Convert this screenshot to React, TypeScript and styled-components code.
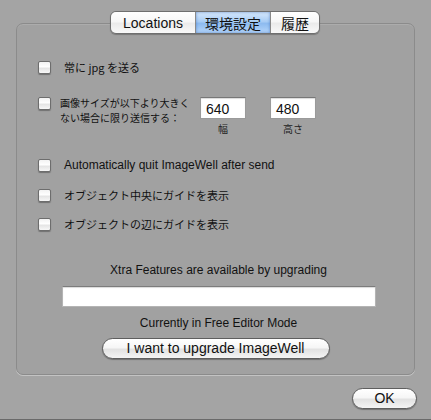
import * as React from 'react';
import styled, { createGlobalStyle } from 'styled-components';

const GlobalStyle = createGlobalStyle`
  html, body {
    margin: 0;
    padding: 0;
    background: #a4a4a4;
  }
`;

const ui = `"Liberation Sans", "Noto Sans CJK JP", Arial, sans-serif`;
const jp = `"Noto Sans CJK JP", "Liberation Sans", sans-serif`;

type Tab = { label: string; jp?: boolean };

const tabs: Tab[] = [
  { label: 'Locations' },
  { label: '環境設定', jp: true },
  { label: '履歴', jp: true },
];

const options = [
  { label: 'Automatically quit ImageWell after send', jp: false, top: 23 },
  { label: 'オブジェクト中央にガイドを表示', jp: true, top: 17 },
  { label: 'オブジェクトの辺にガイドを表示', jp: true, top: 16 },
];

export default function App() {
  const [active, setActive] = React.useState(1);

  return (
    <>
      <GlobalStyle />
      <Window>
        <TabBar>
          {tabs.map((t, i) => (
            <TabButton
              key={t.label}
              $selected={i === active}
              $jp={t.jp}
              $width={[84, 75, 49][i]}
              onClick={() => setActive(i)}
            >
              {t.label}
            </TabButton>
          ))}
        </TabBar>

        <Panel>
          <Row $top={37}>
            <Check />
            <Label $jp $gap={13}>
              常に jpg を送る
            </Label>
          </Row>

          <SizeRow>
            <Check />
            <SizeLabel>
              <SizeLine>画像サイズが以下より大きく</SizeLine>
              <SizeLine>ない場合に限り送信する：</SizeLine>
            </SizeLabel>
            <SizeField>
              <NumberBox>640</NumberBox>
              <Caption>幅</Caption>
            </SizeField>
            <SizeField>
              <NumberBox>480</NumberBox>
              <Caption>高さ</Caption>
            </SizeField>
          </SizeRow>

          {options.map((o) => (
            <Row key={o.label} $top={o.top}>
              <Check />
              <Label $jp={o.jp} $gap={13}>
                {o.label}
              </Label>
            </Row>
          ))}

          <Notice $top={32}>Xtra Features are available by upgrading</Notice>
          <KeyField />
          <Notice $top={9}>Currently in Free Editor Mode</Notice>
          <PillButton $width={228} $top={8}>
            I want to upgrade ImageWell
          </PillButton>
        </Panel>

        <Footer>
          <PillButton $width={65}>OK</PillButton>
        </Footer>
      </Window>
    </>
  );
}

const Window = styled.div`
  width: 431px;
  height: 420px;
  box-sizing: border-box;
  padding-top: 11px;
  display: flex;
  flex-direction: column;
  background: #a4a4a4;
  font-family: ${ui};
  color: #111;
  overflow: hidden;
  border-bottom: 1px solid #6a6a6a;
`;

const TabBar = styled.div`
  align-self: center;
  display: flex;
  height: 21px;
  margin-left: -1px;
  margin-bottom: -11px;
  position: relative;
  z-index: 1;
  border: 1px solid #6f6f6f;
  border-radius: 6px;
  overflow: hidden;
  box-shadow: 0 1px 1px rgba(0, 0, 0, 0.25);
`;

const TabButton = styled.button<{ $selected: boolean; $jp?: boolean; $width: number }>`
  width: ${(p) => p.$width}px;
  height: 100%;
  margin: 0;
  padding: 0;
  border: none;
  border-left: 1px solid #8a8a8a;
  font-family: ${(p) => (p.$jp ? jp : ui)};
  font-size: 14px;
  line-height: 20px;
  color: #111;
  cursor: default;
  background: ${(p) =>
    p.$selected
      ? 'linear-gradient(#d7e8fb 0%, #a9cdf5 45%, #8dbbf0 55%, #b6d6fa 100%)'
      : 'linear-gradient(#ffffff 0%, #f7f7f7 45%, #ebebeb 55%, #f9f9f9 100%)'};
  box-shadow: ${(p) => (p.$selected ? 'inset 0 0 3px rgba(40, 90, 170, 0.6)' : 'none')};

  &:first-child {
    border-left: none;
  }
`;

const Panel = styled.div`
  margin: 0 16px;
  height: 352px;
  box-sizing: border-box;
  border: 1px solid #8b8b8b;
  border-radius: 7px;
  background: #a1a1a1;
  box-shadow: inset 0 1px 0 rgba(255, 255, 255, 0.12), 0 1px 0 rgba(255, 255, 255, 0.35);
  display: flex;
  flex-direction: column;
`;

const Row = styled.div<{ $top: number }>`
  display: flex;
  align-items: center;
  height: 13px;
  margin-top: ${(p) => p.$top}px;
  padding-left: 21px;
`;

const Check = styled.span`
  flex: none;
  width: 13px;
  height: 13px;
  box-sizing: border-box;
  border: 1px solid #6d6d6d;
  border-radius: 2px;
  background: linear-gradient(#f2f2f2 0%, #ffffff 45%, #e4e4e4 55%, #f7f7f7 100%);
  box-shadow: 0 1px 1px rgba(0, 0, 0, 0.3);
`;

const Label = styled.span<{ $jp?: boolean; $gap: number }>`
  margin-left: ${(p) => p.$gap}px;
  font-family: ${(p) => (p.$jp ? jp : ui)};
  font-size: ${(p) => (p.$jp ? '11px' : '12px')};
  line-height: 13px;
  white-space: nowrap;
`;

const SizeRow = styled.div`
  display: flex;
  align-items: flex-start;
  margin-top: 23px;
  height: 39px;
  padding-left: 21px;
`;

const SizeLabel = styled.div`
  width: 140px;
  margin: -1px 0 0 9px;
  display: flex;
  flex-direction: column;
`;

const SizeLine = styled.span`
  display: block;
  font-family: ${jp};
  font-size: 10px;
  line-height: 14.5px;
  white-space: nowrap;
`;

const SizeField = styled.div`
  display: flex;
  flex-direction: column;
  align-items: center;
  width: 46px;
  margin-right: 24px;
`;

const NumberBox = styled.div`
  width: 46px;
  height: 22px;
  box-sizing: border-box;
  padding: 3px 0 0 5px;
  background: #fff;
  border: 1px solid #9a9a9a;
  border-top-color: #777;
  box-shadow: inset 0 1px 1px rgba(0, 0, 0, 0.15);
  font-family: ${ui};
  font-size: 14px;
  line-height: 16px;
`;

const Caption = styled.span`
  margin-top: 4px;
  font-family: ${jp};
  font-size: 10px;
  line-height: 12px;
  color: #222;
`;

const Notice = styled.div<{ $top: number }>`
  margin-top: ${(p) => p.$top}px;
  margin-left: 6px;
  text-align: center;
  font-size: 12px;
  line-height: 14px;
`;

const KeyField = styled.div`
  align-self: center;
  margin-top: 9px;
  margin-left: 7px;
  width: 314px;
  height: 21px;
  box-sizing: border-box;
  background: #fff;
  border: 1px solid #b4b4b4;
  border-top-color: #7c7c7c;
  box-shadow: inset 0 1px 1px rgba(0, 0, 0, 0.15);
`;

const PillButton = styled.button<{ $width: number; $top?: number }>`
  align-self: center;
  width: ${(p) => p.$width}px;
  height: 21px;
  margin: ${(p) => p.$top ?? 0}px 0 0 0;
  padding: 0;
  box-sizing: border-box;
  border: 1px solid #5e5e5e;
  border-radius: 11px;
  background: linear-gradient(#ffffff 0%, #f6f6f6 45%, #e2e2e2 55%, #f4f4f4 100%);
  box-shadow: 0 1px 1px rgba(0, 0, 0, 0.3);
  font-family: ${ui};
  font-size: 14px;
  line-height: 19px;
  color: #111;
  cursor: default;
`;

const Footer = styled.div`
  display: flex;
  justify-content: flex-end;
  margin-top: 13px;
  padding-right: 14px;
`;
